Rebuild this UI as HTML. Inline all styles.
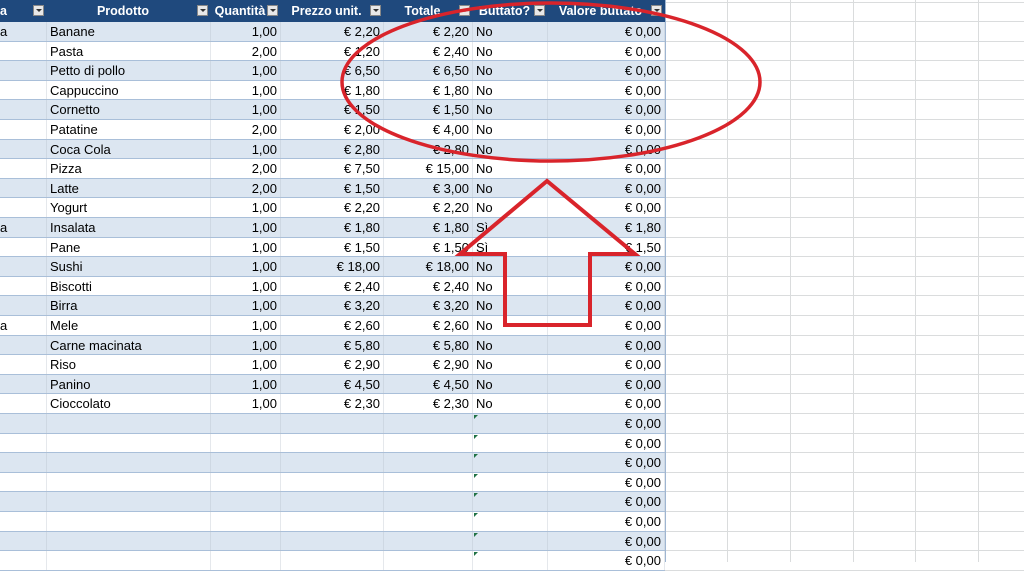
<!DOCTYPE html>
<html><head><meta charset="utf-8"><style>
body{margin:0;width:1024px;height:562px;overflow:hidden;background:#fff;font-family:"Liberation Sans",sans-serif;position:relative}
.c{position:absolute;font-size:13px;line-height:19.6px;height:19.6px;white-space:nowrap;box-sizing:border-box}
.r{text-align:right;padding-right:3px}
.l{padding-left:3px}
.h{color:#fff;font-weight:bold;background:#1f497d;height:22px;line-height:22px;top:0;font-size:12.5px}
.dd{position:absolute;width:11px;height:11px;background:#e8e8e8;border:1px solid #888;top:5px;box-sizing:border-box}
.dd:after{content:"";position:absolute;left:2px;top:3px;border-left:3px solid transparent;border-right:3px solid transparent;border-top:3px solid #333}
</style></head><body>
<div id="g"></div>
<svg width="1024" height="562" style="position:absolute;left:0;top:0">
<ellipse cx="551" cy="82" rx="209" ry="79" fill="none" stroke="#d9242b" stroke-width="3.5"/>
<path d="M547 181 L460 254 L505 254 L505 325 L590 325 L590 254 L635 254 Z" fill="none" stroke="#d9242b" stroke-width="4" stroke-linejoin="miter"/>
</svg>
<script>
var data=[["a","Banane","1,00","€ 2,20","€ 2,20","No","€ 0,00"],["","Pasta","2,00","€ 1,20","€ 2,40","No","€ 0,00"],["","Petto di pollo","1,00","€ 6,50","€ 6,50","No","€ 0,00"],["","Cappuccino","1,00","€ 1,80","€ 1,80","No","€ 0,00"],["","Cornetto","1,00","€ 1,50","€ 1,50","No","€ 0,00"],["","Patatine","2,00","€ 2,00","€ 4,00","No","€ 0,00"],["","Coca Cola","1,00","€ 2,80","€ 2,80","No","€ 0,00"],["","Pizza","2,00","€ 7,50","€ 15,00","No","€ 0,00"],["","Latte","2,00","€ 1,50","€ 3,00","No","€ 0,00"],["","Yogurt","1,00","€ 2,20","€ 2,20","No","€ 0,00"],["a","Insalata","1,00","€ 1,80","€ 1,80","Sì","€ 1,80"],["","Pane","1,00","€ 1,50","€ 1,50","Sì","€ 1,50"],["","Sushi","1,00","€ 18,00","€ 18,00","No","€ 0,00"],["","Biscotti","1,00","€ 2,40","€ 2,40","No","€ 0,00"],["","Birra","1,00","€ 3,20","€ 3,20","No","€ 0,00"],["a","Mele","1,00","€ 2,60","€ 2,60","No","€ 0,00"],["","Carne macinata","1,00","€ 5,80","€ 5,80","No","€ 0,00"],["","Riso","1,00","€ 2,90","€ 2,90","No","€ 0,00"],["","Panino","1,00","€ 4,50","€ 4,50","No","€ 0,00"],["","Cioccolato","1,00","€ 2,30","€ 2,30","No","€ 0,00"]];
var xs=[0,47,211,281,384,473,548,665],al=["l","l","r","r","r","l","r"];
var hd=["a","Prodotto","Quantità","Prezzo unit.","Totale","Buttato?","Valore buttato"];
var s="";
for(var i=0;i<7;i++){var w=xs[i+1]-xs[i];
 s+='<div class="c h" style="left:'+xs[i]+'px;width:'+w+'px;text-align:'+(i==0?'left;padding-left:0':'center;padding-right:12px')+';overflow:hidden">'+hd[i]+'</div>';
 s+='<div class="dd" style="left:'+(xs[i+1]-14)+'px"></div>';}
for(var r=0;r<28;r++){var y=22+r*19.6,bg=r%2==0?"#dce6f1":"#fff";
 s+='<div style="position:absolute;left:0;top:'+y+'px;width:665px;height:19.6px;background:'+bg+';border-bottom:1px solid #a9bfd9;box-sizing:border-box"></div>';
 var d=data[r]||["","","","","","","€ 0,00"];
 for(var i=0;i<7;i++){var w=xs[i+1]-xs[i];
  s+='<div class="c '+al[i]+'" style="left:'+xs[i]+'px;top:'+y+'px;width:'+w+'px;border-right:1px solid rgba(180,190,200,0.35)'+(i==0?';padding-left:0':'')+'">'+d[i]+'</div>';}
 if(r>=20)s+='<div style="position:absolute;left:474px;top:'+(y+1)+'px;border-top:4px solid #217346;border-right:4px solid transparent"></div>';
 s+='<div style="position:absolute;left:665px;top:'+(y+18.6)+'px;width:359px;height:1px;background:#dadcdd"></div>';}
s+='<div style="position:absolute;left:665px;top:2px;width:359px;height:1px;background:#dadcdd"></div>';
s+='<div style="position:absolute;left:665px;top:21px;width:359px;height:1px;background:#dadcdd"></div>';
[727,790,853,915,978].forEach(function(x){s+='<div style="position:absolute;left:'+x+'px;top:0;width:1px;height:562px;background:#dadcdd"></div>';});
s+='<div style="position:absolute;left:665px;top:0;width:1px;height:562px;background:#9fb6d2"></div>';
document.getElementById("g").innerHTML=s;
</script>
</body></html>
